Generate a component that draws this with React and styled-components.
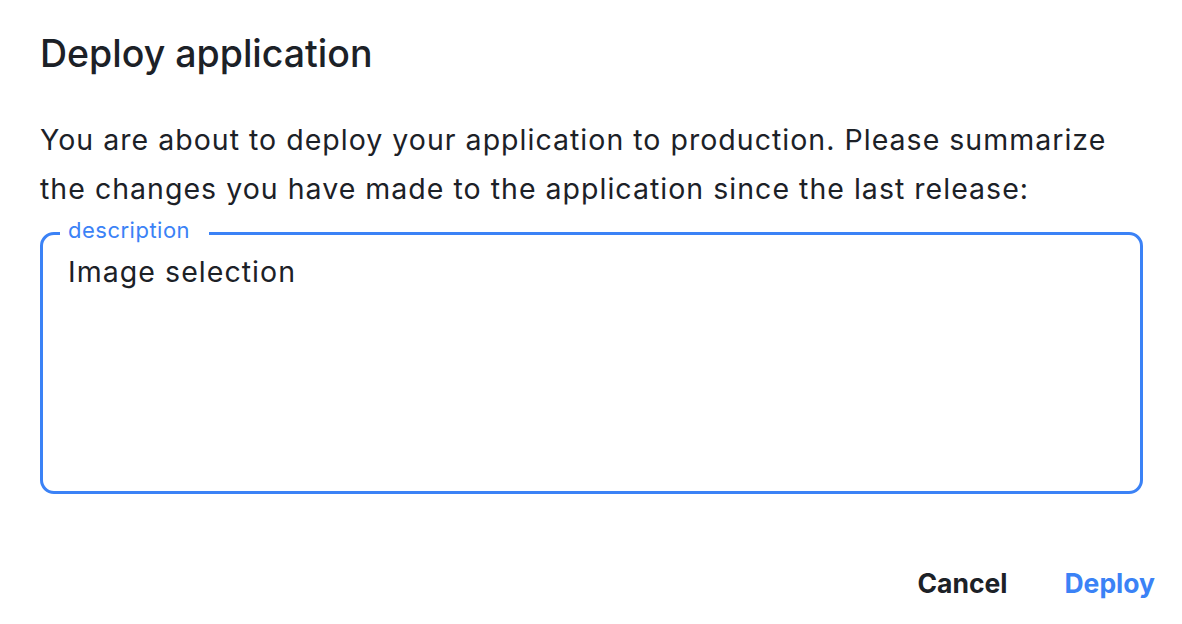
import React from "react";
import styled, { createGlobalStyle } from "styled-components";

const Global = createGlobalStyle`
  html, body { margin: 0; padding: 0; background: #fff; }
  body { font-family: Inter, "Noto Sans", sans-serif; color: #1c2127; }
`;

const Dialog = styled.div`
  width: 1182px;
  height: 624px;
  box-sizing: border-box;
  padding: 30px 27px 0 40px;
  display: flex;
  flex-direction: column;
`;

const Title = styled.h1`
  margin: 0;
  font-size: 37.5px;
  font-weight: 500;
  line-height: 48px;
`;

const Text = styled.p`
  margin: 37px 0 0 0;
  font-size: 28.5px;
  line-height: 49px;
  font-weight: 400;
  letter-spacing: 1.02px;
  width: 1120px;
`;

const Field = styled.fieldset`
  margin: 5px 0 0 0;
  width: 1103px;
  height: 276px;
  box-sizing: border-box;
  border: 3px solid #3b82f6;
  border-radius: 14px;
  padding: 0 25px;
`;

const Legend = styled.legend`
  color: #3b82f6;
  font-size: 22px;
  line-height: 24px;
  letter-spacing: 0.5px;
  padding: 0 19px 7px 8px;
  margin-left: -8px;
`;

const Value = styled.textarea`
  display: block;
  width: 100%;
  height: 200px;
  border: none;
  outline: none;
  resize: none;
  padding: 0;
  margin: 5px 0 0 0;
  font-family: Inter, "Noto Sans", sans-serif;
  font-size: 28.5px;
  line-height: 36px;
  letter-spacing: 1.05px;
  color: #1c2127;
  background: transparent;
`;

const Actions = styled.div`
  margin-top: 73px;
  display: flex;
  justify-content: flex-end;
  gap: 57px;
`;

const Button = styled.button`
  border: none;
  background: none;
  padding: 0;
  font-family: Inter, "Noto Sans", sans-serif;
  font-size: 26.5px;
  font-weight: 700;
  line-height: 32px;
  color: ${(p) => (p.$primary ? "#3b82f6" : "#1c2127")};
  cursor: pointer;
`;

export default function App() {
  return (
    <>
      <Global />
      <Dialog>
        <Title>Deploy application</Title>
        <Text>
          You are about to deploy your application to production. Please summarize
          the changes you have made to the application since the last release:
        </Text>
        <Field>
          <Legend>description</Legend>
          <Value defaultValue="Image selection" />
        </Field>
        <Actions>
          <Button>Cancel</Button>
          <Button $primary>Deploy</Button>
        </Actions>
      </Dialog>
    </>
  );
}
